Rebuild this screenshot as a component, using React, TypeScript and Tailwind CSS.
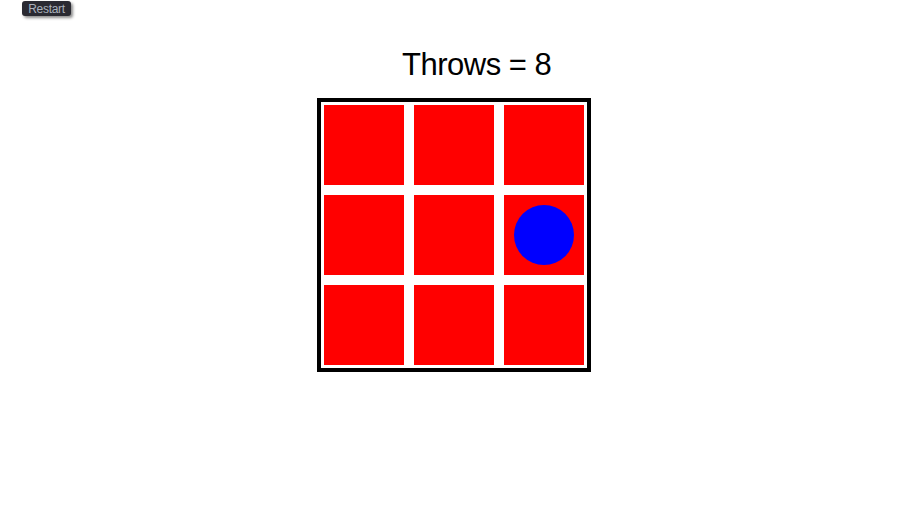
const cells = [0, 1, 2, 3, 4, 5, 6, 7, 8];

export default function App() {
  const ballAt = 5;

  return (
    <div className="h-[508px] w-[906px] bg-white font-['Liberation_Sans',sans-serif]">
      <div className="pl-[22px] pt-px">
        <button
          type="button"
          className="flex h-[15px] w-[49px] items-center justify-center rounded-[3px] bg-[#2a2a32] pt-px text-[12px] leading-none tracking-[-0.3px] text-[#aab1bc] shadow-[2px_2px_3px_rgba(0,0,0,0.45)]"
        >
          Restart
        </button>
      </div>

      <h1 className="mt-[31px] pl-[402px] text-[31px] leading-[36px] tracking-[-0.5px] text-black">
        Throws = 8
      </h1>

      <div className="mt-[15px] pl-[317px]">
        <div className="w-[274px] border-4 border-black bg-white p-[3px]">
          <div className="grid grid-cols-3 gap-[10px]">
            {cells.map((i) => (
              <div
                key={i}
                className="flex h-[80px] w-[80px] items-center justify-center bg-[#ff0000]"
              >
                {i === ballAt && (
                  <div className="h-[60px] w-[60px] rounded-full bg-[#0000ff]" />
                )}
              </div>
            ))}
          </div>
        </div>
      </div>
    </div>
  );
}
